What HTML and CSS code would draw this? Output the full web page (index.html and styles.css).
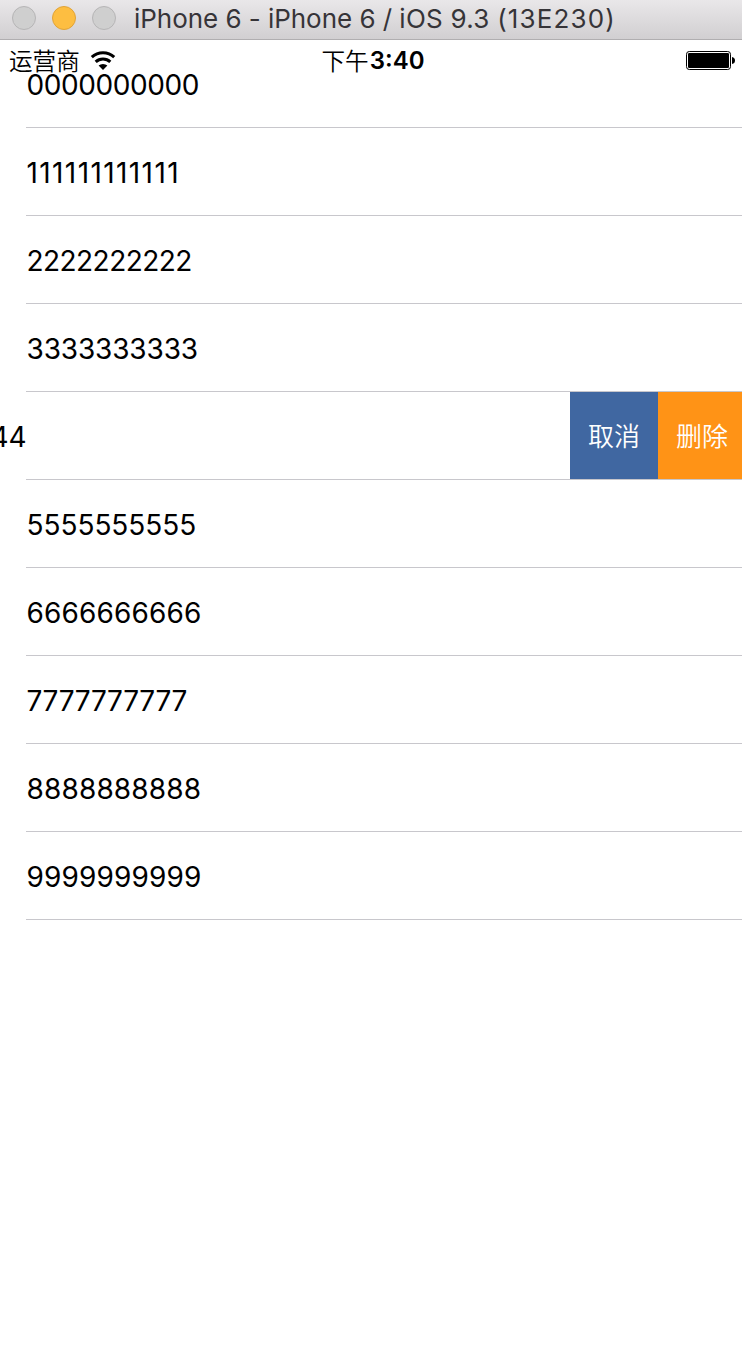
FILE: index.html
```html
<!DOCTYPE html>
<html lang="zh-CN">
<head>
<meta charset="utf-8">
<title>iPhone 6</title>
<link rel="stylesheet" href="styles.css">
</head>
<body>
<header class="titlebar">
  <div class="lights"><span class="light"></span><span class="light minimize"></span><span class="light"></span></div>
  <span class="title">iPhone 6 - iPhone 6 / <span class="version">iOS 9.3 </span><span class="build">(13E230)</span></span>
</header>
<main class="screen">
  <div class="status">
    <div class="carrier"><span class="han">运营商</span>
      <svg class="wifi" width="26" height="20" viewBox="0 0 26 20">
        <path d="M1.8 6.2A16.2 16.2 0 0 1 24.2 6.2M5.7 10.9A10.6 10.6 0 0 1 20.3 10.9" fill="none" stroke="#000" stroke-width="3"/>
        <path d="M8.6 14.6A6.6 6.6 0 0 1 17.4 14.6L13 19Z"/>
      </svg>
    </div>
    <div class="time"><span class="han">下午</span><span class="clock">3:40</span></div>
    <svg class="battery" width="50" height="20" viewBox="0 0 50 20">
      <rect x=".5" y=".5" width="44" height="18" rx="2.8" fill="none" stroke="#000"/>
      <rect x="2" y="2" width="41" height="15" rx="1.3"/>
      <path d="M46 6Q49 6.5 49 9.5T46 13Z"/>
    </svg>
  </div>
  <ul class="list">
    <li class="row"><span class="label d0">0000000000</span></li>
    <li class="row"><span class="label d1">111111111111</span></li>
    <li class="row"><span class="label d2">2222222222</span></li>
    <li class="row"><span class="label d3">3333333333</span></li>
    <li class="row swiped"><span class="label d4">44</span>
      <div class="actions"><button class="action cancel">取消</button><button class="action delete">删除</button></div>
    </li>
    <li class="row"><span class="label d5">5555555555</span></li>
    <li class="row"><span class="label d6">6666666666</span></li>
    <li class="row"><span class="label d7">7777777777</span></li>
    <li class="row"><span class="label d8">8888888888</span></li>
    <li class="row"><span class="label d9">9999999999</span></li>
  </ul>
</main>
</body>
</html>
```
FILE: styles.css
```css
* { box-sizing: border-box; }
body { margin: 0; width: 742px; height: 1370px; overflow: hidden; background: #fff; color: #000; font-family: Inter, "Noto Sans CJK SC", sans-serif; }
.titlebar { height: 40px; display: flex; align-items: center; padding: 0 0 3px 12px; background: linear-gradient(#e9e7e9, #d1cfd1); border-bottom: 1px solid #b0aeb0; }
.lights { display: flex; gap: 16px; }
.light { width: 24px; height: 24px; border-radius: 50%; background: #cfcfcf; border: 1px solid #b6b5b6; }
.minimize { background: #fdbe41; border-color: #e0a339; }
.title { margin-left: 18px; padding-top: 2px; font-size: 26px; line-height: 36px; letter-spacing: -.04px; color: #363438; white-space: nowrap; }
.version { letter-spacing: .25px; }
.build { letter-spacing: 1.15px; }
.screen { position: relative; height: 1330px; }
.status { position: absolute; z-index: 1; top: 0; left: 0; width: 742px; height: 42px; display: grid; grid-template-columns: 1fr auto 1fr; align-items: center; padding: 0 6px 0 9px; }
.carrier, .time { display: flex; align-items: center; }
.carrier { gap: 10px; }
.time { padding-left: 1px; }
.han { font: 350 23.6px/38px "Noto Sans CJK SC", sans-serif; padding-bottom: 2px; }
.clock { font-size: 24px; line-height: 40px; font-weight: 600; margin-left: 1px; }
.battery { justify-self: end; }
.list { list-style: none; margin: 0; padding: 0; }
.row { height: 88px; display: flex; align-items: center; padding-left: 26.5px; background: linear-gradient(#c8c7cc, #c8c7cc) 26px 87px / 716px 1px no-repeat; }
.label { padding-top: 2px; font-size: 28px; line-height: 88px; white-space: nowrap; }
.d0 { letter-spacing: -.42px; }
.d1 { letter-spacing: 1.4px; }
.d2 { letter-spacing: -.55px; }
.d3 { letter-spacing: -.15px; }
.d5 { letter-spacing: -.05px; }
.d6, .d8, .d9 { letter-spacing: .15px; }
.d7 { letter-spacing: -.27px; }
.swiped { padding-left: 0; justify-content: space-between; overflow: hidden; }
.d4 { margin-left: -9.5px; }
.actions { display: flex; height: 87px; align-self: flex-start; }
.action { border: 0; margin: 0; padding: 0 0 2px; width: 88px; color: #fff; font: 350 26px/85px "Noto Sans CJK SC", sans-serif; }
.cancel { background: #4067a1; }
.delete { background: #ff9316; width: 84px; padding-left: 4px; }
```
